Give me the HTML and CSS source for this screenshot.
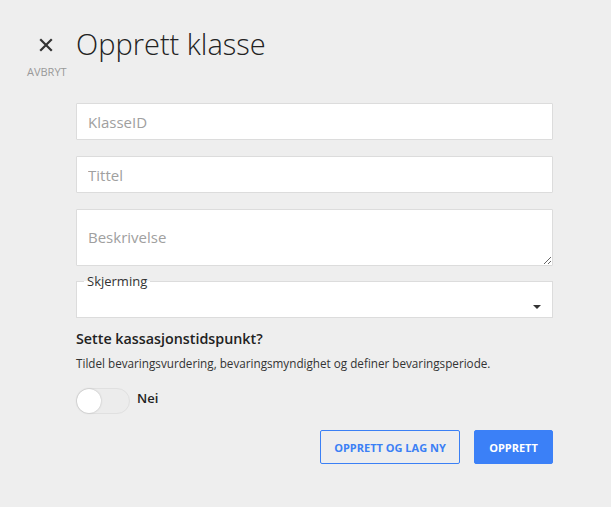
FILE: index.html
```html
<!DOCTYPE html>
<html lang="no">
<head>
<meta charset="utf-8">
<title>Opprett klasse</title>
<link rel="stylesheet" href="styles.css">
</head>
<body>
<div class="page">
  <header class="header">
    <button class="cancel" type="button">
      <svg class="cancel-icon" width="14" height="14" viewBox="0 0 14 14" aria-hidden="true">
        <path d="M2 2 L12 12 M12 2 L2 12" stroke="#333" stroke-width="2.2" stroke-linecap="square" fill="none"/>
      </svg>
      <span class="cancel-label">AVBRYT</span>
    </button>
    <h1 class="title">Opprett klasse</h1>
  </header>
  <form class="form">
    <input class="field" type="text" placeholder="KlasseID">
    <input class="field" type="text" placeholder="Tittel">
    <textarea class="field area" placeholder="Beskrivelse"></textarea>
    <fieldset class="select">
      <legend class="select-legend">Skjerming</legend>
      <span class="select-arrow"></span>
    </fieldset>
    <h2 class="section-title">Sette kassasjonstidspunkt?</h2>
    <p class="section-text">Tildel bevaringsvurdering, bevaringsmyndighet og definer bevaringsperiode.</p>
    <div class="toggle-row">
      <span class="toggle"><span class="knob"></span></span>
      <span class="toggle-label">Nei</span>
    </div>
    <div class="actions">
      <button class="btn btn-outline" type="button">OPPRETT OG LAG NY</button>
      <button class="btn btn-primary" type="button">OPPRETT</button>
    </div>
  </form>
</div>
</body>
</html>
```
FILE: styles.css
```css
* { box-sizing: border-box; }
html, body { margin: 0; padding: 0; }
body {
  background: #eeeeee;
  font-family: "Open Sans", "Liberation Sans", sans-serif;
  color: #333;
  width: 611px;
  height: 507px;
  overflow: hidden;
}
.page { padding: 24px 0 0 0; }
.header {
  display: flex;
  align-items: flex-start;
}
.cancel {
  width: 76px;
  border: 0;
  background: none;
  padding: 14px 0 0 27px;
  display: flex;
  flex-direction: column;
  align-items: flex-start;
  cursor: pointer;
  font-family: inherit;
}
.cancel-icon { display: block; margin-left: 12px; }
.cancel-label {
  margin-top: 13px;
  font-size: 11px;
  color: #999;
  line-height: 14px;
}
.title {
  margin: 0;
  font-size: 29px;
  font-weight: 300;
  line-height: 40px;
  color: #222;
}
.form {
  margin: 24px 0 0 76px;
  width: 477px;
  display: flex;
  flex-direction: column;
}
.field {
  display: block;
  width: 477px;
  height: 37px;
  border: 1px solid #dcdcdc;
  background: #fff;
  font-family: inherit;
  font-size: 15px;
  padding: 0 11px;
  color: #333;
  margin: 0 0 16px 0;
  border-radius: 1px;
  outline: none;
}
.field::placeholder { color: #a0a0a0; }
.area {
  height: 57px;
  padding: 17px 11px 0;
  resize: vertical;
  margin-bottom: 8px;
  line-height: 20px;
}
.select {
  margin: 0;
  padding: 0 0 0 7px;
  border: 1px solid #dcdcdc;
  background: #fff;
  height: 44px;
  position: relative;
  min-width: 0;
}
.select-legend {
  padding: 0 3px;
  font-size: 13px;
  line-height: 14px;
  color: #333;
}
.select-arrow {
  position: absolute;
  right: 11px;
  top: 17px;
  width: 0;
  height: 0;
  border-left: 4px solid transparent;
  border-right: 4px solid transparent;
  border-top: 4px solid #333;
}
.section-title {
  margin: 10px 0 0 0;
  font-size: 14.3px;
  font-weight: 600;
  line-height: 22px;
  color: #222;
}
.section-text {
  margin: 5px 0 0 0;
  font-size: 11.7px;
  line-height: 17px;
  color: #333;
}
.toggle-row {
  margin-top: 16px;
  display: flex;
  align-items: center;
  gap: 7px;
}
.toggle {
  width: 54px;
  height: 26px;
  border-radius: 13px;
  background: #ececec;
  border: 1px solid #e0e0e0;
  position: relative;
  display: block;
}
.knob {
  position: absolute;
  left: 0;
  top: 0;
  width: 24px;
  height: 24px;
  border-radius: 50%;
  background: #fff;
  box-shadow: 0 0 2px rgba(0,0,0,0.25);
}
.toggle-label {
  font-size: 13px;
  font-weight: 600;
  color: #222;
  margin-top: -6px;
}
.actions {
  margin-top: 16px;
  display: flex;
  justify-content: flex-end;
  gap: 14px;
}
.btn {
  height: 34px;
  font-family: inherit;
  font-size: 11px;
  font-weight: 700;
  border-radius: 2px;
  padding: 0;
  cursor: pointer;
}
.btn-outline {
  width: 140px;
  background: transparent;
  border: 1px solid #3b80f5;
  color: #3b80f5;
}
.btn-primary {
  width: 79px;
  background: #3b80f7;
  border: 1px solid #3b80f7;
  color: #fff;
}
```
